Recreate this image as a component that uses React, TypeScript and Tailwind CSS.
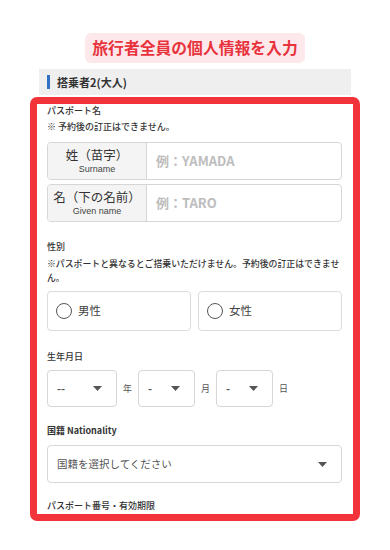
import React from "react";

const font = { fontFamily: '"Noto Sans CJK JP", "Noto Sans", sans-serif' };

function Caret() {
  return (
    <svg width="9" height="5" viewBox="0 0 9 5" className="shrink-0">
      <path d="M0 0 L9 0 L4.5 5 Z" fill="#555" />
    </svg>
  );
}

function NameRow({ jp, en, ph }: { jp: string; en: string; ph: string }) {
  return (
    <div className="flex h-[38px] rounded-[4px] border border-[#d6d6d6] overflow-hidden">
      <div className="w-[99px] shrink-0 bg-[#f4f4f4] border-r border-[#d6d6d6] flex flex-col items-center justify-center">
        <div className="text-[12.5px] leading-[16px] text-[#333]">{jp}</div>
        <div className="text-[9px] leading-[12px] text-[#444]" style={{ fontFamily: '"Liberation Sans", Arial, sans-serif' }}>{en}</div>
      </div>
      <div className="flex-1 flex items-center pl-[9px] text-[13px] font-bold text-[#bdbdbd]">{ph}</div>
    </div>
  );
}

function Radio({ label }: { label: string }) {
  return (
    <div className="flex-1 h-[40px] rounded-[4px] border border-[#dcdcdc] flex items-center pl-[8px] gap-[6px]">
      <div className="w-[16px] h-[16px] rounded-full border-[1.5px] border-[#555]" />
      <span className="text-[11.5px] text-[#444]">{label}</span>
    </div>
  );
}

function DateSelect({ w, text }: { w: string; text: string }) {
  return (
    <div className={`${w} h-[37px] rounded-[4px] border border-[#d6d6d6] flex items-center justify-between pl-[9px] pr-[14px]`}>
      <span className="text-[11px] font-bold text-[#555]">{text}</span>
      <Caret />
    </div>
  );
}

export default function App() {
  return (
    <div className="w-[390px] h-[550px] bg-white overflow-hidden pt-[33px]" style={font}>
      <div className="mx-auto w-fit h-[30px] px-[7px] rounded-[6px] bg-[#fde9eb] flex items-center">
        <span className="text-[15.8px] font-bold text-[#e8323c]">旅行者全員の個人情報を入力</span>
      </div>
      <div className="mt-[6px] mx-[39px] h-[26px] bg-[#efefef] flex items-center pl-[8px]">
        <div className="w-[3px] h-[14px] bg-[#2f72c4]" />
        <span className="ml-[7px] text-[11px] font-bold text-[#333]">搭乗者2(大人)</span>
      </div>
      <div className="mt-[2px] mx-[30px] h-[424px] border-[7px] border-[#f2333a] rounded-[7px] overflow-hidden bg-white pl-[10px] pr-[11px]">
        <div className="text-[9px] leading-[14px] font-medium text-[#333]">パスポート名</div>
        <div className="mt-[2px] text-[9px] leading-[14px] font-medium text-[#333]">※ 予約後の訂正はできません。</div>
        <div className="mt-[8px] flex flex-col gap-[4px]">
          <NameRow jp="姓（苗字）" en="Surname" ph="例：YAMADA" />
          <NameRow jp="名（下の名前）" en="Given name" ph="例：TARO" />
        </div>
        <div className="mt-[18px] text-[9px] leading-[14px] font-medium text-[#333]">性別</div>
        <div className="mt-[3px] text-[8.9px] leading-[14px] font-medium text-[#333]">
          ※パスポートと異なるとご搭乗いただけません。予約後の訂正はできません。
        </div>
        <div className="mt-[6px] flex gap-[7px]">
          <Radio label="男性" />
          <Radio label="女性" />
        </div>
        <div className="mt-[19px] text-[9px] leading-[14px] font-medium text-[#333]">生年月日</div>
        <div className="mt-[6px] flex items-center">
          <DateSelect w="w-[70px]" text="--" />
          <span className="w-[21px] text-center text-[9px] text-[#555]">年</span>
          <DateSelect w="w-[57px]" text="-" />
          <span className="w-[21px] text-center text-[9px] text-[#555]">月</span>
          <DateSelect w="w-[57px]" text="-" />
          <span className="w-[21px] text-center text-[9px] text-[#555]">日</span>
        </div>
        <div className="mt-[17px] text-[9px] leading-[14px] font-bold text-[#333]">国籍 Nationality</div>
        <div className="mt-[7px] h-[38px] rounded-[4px] border border-[#d6d6d6] flex items-center justify-between pl-[9px] pr-[14px]">
          <span className="text-[10.5px] text-[#555]">国籍を選択してください</span>
          <Caret />
        </div>
        <div className="mt-[16px] text-[9px] leading-[14px] font-medium text-[#333]">パスポート番号・有効期限</div>
      </div>
    </div>
  );
}
